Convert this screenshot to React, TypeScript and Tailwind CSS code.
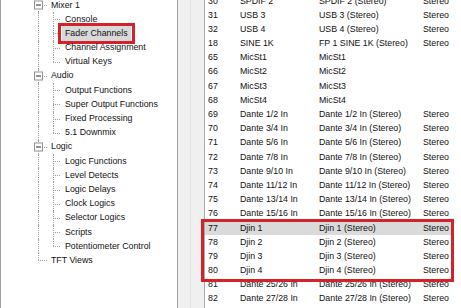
import React from "react";

const RH = "h-[14.2px]";

const tree = [
  { label: "Mixer 1", children: ["Console", "Fader Channels", "Channel Assignment", "Virtual Keys"] },
  { label: "Audio", children: ["Output Functions", "Super Output Functions", "Fixed Processing", "5.1 Downmix"] },
  {
    label: "Logic",
    children: ["Logic Functions", "Level Detects", "Logic Delays", "Clock Logics", "Selector Logics", "Scripts", "Potentiometer Control"],
  },
  { label: "TFT Views", children: [] as string[] },
];

const rows: [string, string, string, string][] = [
  ["30", "SPDIF 2", "SPDIF 2 (Stereo)", "Stereo"],
  ["31", "USB 3", "USB 3 (Stereo)", "Stereo"],
  ["32", "USB 4", "USB 4 (Stereo)", "Stereo"],
  ["18", "SINE 1K", "FP 1 SINE 1K (Stereo)", "Stereo"],
  ["65", "MicSt1", "MicSt1", ""],
  ["66", "MicSt2", "MicSt2", ""],
  ["67", "MicSt3", "MicSt3", ""],
  ["68", "MicSt4", "MicSt4", ""],
  ["69", "Dante 1/2 In", "Dante 1/2 In (Stereo)", "Stereo"],
  ["70", "Dante 3/4 In", "Dante 3/4 In (Stereo)", "Stereo"],
  ["71", "Dante 5/6 In", "Dante 5/6 In (Stereo)", "Stereo"],
  ["72", "Dante 7/8 In", "Dante 7/8 In (Stereo)", "Stereo"],
  ["73", "Dante 9/10 In", "Dante 9/10 In (Stereo)", "Stereo"],
  ["74", "Dante 11/12 In", "Dante 11/12 In (Stereo)", "Stereo"],
  ["75", "Dante 13/14 In", "Dante 13/14 In (Stereo)", "Stereo"],
  ["76", "Dante 15/16 In", "Dante 15/16 In (Stereo)", "Stereo"],
];
const djin: [string, string, string, string][] = [
  ["77", "Djin 1", "Djin 1 (Stereo)", "Stereo"],
  ["78", "Djin 2", "Djin 2 (Stereo)", "Stereo"],
  ["79", "Djin 3", "Djin 3 (Stereo)", "Stereo"],
  ["80", "Djin 4", "Djin 4 (Stereo)", "Stereo"],
];
const tail: [string, string, string, string][] = [
  ["81", "Dante 25/26 In", "Dante 25/26 In (Stereo)", "Stereo"],
  ["82", "Dante 27/28 In", "Dante 27/28 In (Stereo)", "Stereo"],
];

const dot = "border-[#a0a0a0] border-dotted";

function TopRow({ label, hasChildren, last }: { label: string; hasChildren: boolean; last: boolean }) {
  return (
    <div className={`flex ${RH} items-center`}>
      <div className="w-[33px]" />
      <div className="relative h-full w-[9px]">
        <span className={`absolute left-[4px] top-0 ${last ? "h-1/2" : "h-full"} border-l ${dot}`} />
        <span className={`absolute left-[4px] top-1/2 w-[9px] border-t ${dot}`} />
        {hasChildren && (
          <span className="absolute left-0 top-1/2 flex h-[9px] w-[9px] -translate-y-1/2 items-center justify-center border border-[#919191] bg-white">
            <span className="h-px w-[5px] bg-[#222]" />
          </span>
        )}
      </div>
      <span className="ml-[8px] whitespace-nowrap">{label}</span>
    </div>
  );
}

function ChildRow({ label, lastChild, selected }: { label: string; lastChild: boolean; selected?: boolean }) {
  return (
    <div className={`flex ${RH} items-center`}>
      <div className="w-[33px]" />
      <div className="relative h-full w-[9px]">
        <span className={`absolute left-[4px] top-0 h-full border-l ${dot}`} />
      </div>
      <div className="w-[6px]" />
      <div className="relative h-full w-[9px]">
        <span className={`absolute left-[4px] top-0 ${lastChild ? "h-1/2" : "h-full"} border-l ${dot}`} />
        <span className={`absolute left-[4px] top-1/2 w-[7px] border-t ${dot}`} />
      </div>
      <span
        className={`relative ml-[4px] flex h-full items-center whitespace-nowrap px-[3px] ${selected ? "bg-[#d9d9d9]" : ""}`}
      >
        {label}
        {selected && <span className="absolute -inset-[4px] -top-[3px] -bottom-[3px] border-[3px] border-[#d4222b]" />}
      </span>
    </div>
  );
}

function ListRow({ r, selected }: { r: [string, string, string, string]; selected?: boolean }) {
  return (
    <div className={`flex ${RH} w-[248px] items-center whitespace-nowrap ${selected ? "bg-[#dadada]" : ""}`}>
      <span className="w-[35px] pl-[3px]">{r[0]}</span>
      <span className="w-[79px]">{r[1]}</span>
      <span className="w-[104px]">{r[2]}</span>
      <span>{r[3]}</span>
    </div>
  );
}

export default function App() {
  return (
    <div
      className="flex h-[308px] w-[461px] overflow-hidden bg-white text-[8.8px] text-[#111]"
      style={{ fontFamily: '"Liberation Sans", Arial, sans-serif' }}
    >
      {/* Tree panel */}
      <div className="h-full w-[177px] border-l border-[#a0a0a0] bg-white">
        <div className="-mt-[2px]">
          {tree.map((g, gi) => (
            <React.Fragment key={g.label}>
              <TopRow label={g.label} hasChildren={g.children.length > 0} last={gi === tree.length - 1} />
              {g.children.map((c, ci) => (
                <ChildRow key={c} label={c} lastChild={ci === g.children.length - 1} selected={c === "Fader Channels"} />
              ))}
            </React.Fragment>
          ))}
        </div>
      </div>

      {/* Splitter */}
      <div className="flex h-full w-[28px] border-l border-[#a0a0a0] bg-[#f0f0f0]">
        <div className="w-[13px] border-r border-[#e2e2e2]" />
        <div className="flex-1 border-r border-[#a9a9a9]" />
      </div>

      {/* List */}
      <div className="relative h-full flex-1 bg-white">
        <div className="-mt-[6px]">
          {rows.map((r) => (
            <ListRow key={r[0]} r={r} />
          ))}
          <div className="relative">
            {djin.map((r) => (
              <ListRow key={r[0]} r={r} selected={r[0] === "77"} />
            ))}
            <span className="absolute -left-[4px] -top-[2px] -bottom-[4px] w-[253px] border-[3px] border-[#d4222b]" />
          </div>
          {tail.map((r) => (
            <ListRow key={r[0]} r={r} />
          ))}
        </div>
      </div>
    </div>
  );
}
